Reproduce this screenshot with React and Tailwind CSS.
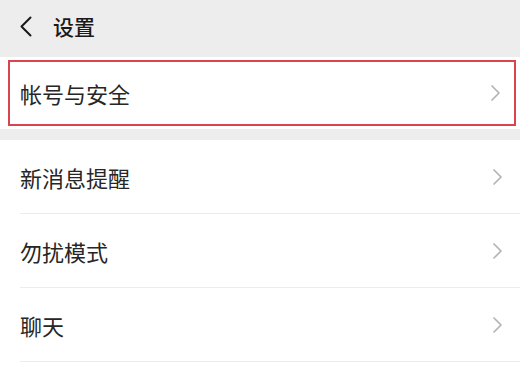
import React from "react";

const font = { fontFamily: '"Noto Sans CJK SC", "Noto Sans", sans-serif' };

function Chevron() {
  return (
    <svg width="11" height="18" viewBox="0 0 11 18" fill="none" className="shrink-0">
      <path d="M2 2 L9 9 L2 16" stroke="#b3b3b3" strokeWidth="1.7" strokeLinecap="round" strokeLinejoin="round" />
    </svg>
  );
}

function Row({ label, last }) {
  return (
    <div className="relative flex h-[74px] items-center justify-between pl-5 pr-[17px]">
      <span className="text-[22px] leading-none text-[#262626]">{label}</span>
      <Chevron />
      {!last && <div className="absolute bottom-0 left-5 right-0 h-px bg-[#ececec]" />}
    </div>
  );
}

export default function App() {
  return (
    <div className="h-[390px] w-[520px] overflow-hidden bg-[#ededed]" style={font}>
      <div className="flex h-[57px] items-center pb-[5px] pl-[19px]">
        <svg width="14" height="21" viewBox="0 0 14 21" fill="none">
          <path d="M11.5 1.5 L2.5 10.5 L11.5 19.5" stroke="#1a1a1a" strokeWidth="2" strokeLinecap="round" strokeLinejoin="round" />
        </svg>
        <span className="ml-[20px] text-[21px] leading-none font-medium text-[#1a1a1a]">设置</span>
      </div>
      <div className="bg-white pb-[3px] pl-2 pr-1 pt-[3px]">
        <div className="flex h-[66px] items-center justify-between border-2 border-[#d8454c] pl-[10px] pr-[13px]">
          <span className="text-[22px] leading-none text-[#262626]">帐号与安全</span>
          <Chevron />
        </div>
      </div>
      <div className="mt-[11px] bg-white">
        <Row label="新消息提醒" />
        <Row label="勿扰模式" />
        <Row label="聊天" />
        <Row label="隐私" last />
      </div>
    </div>
  );
}
